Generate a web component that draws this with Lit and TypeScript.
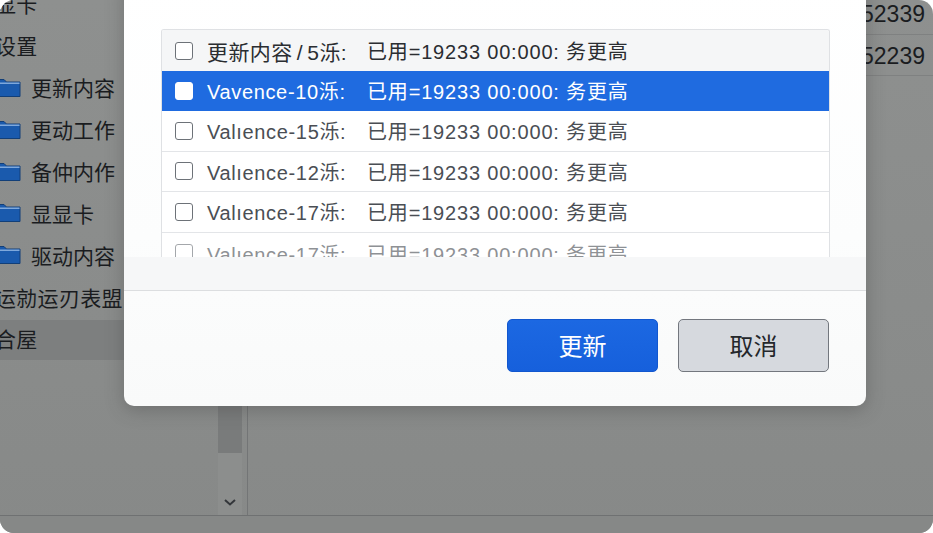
import { LitElement, html, css } from "lit";
import { customElement } from "lit/decorators.js";

const VALUE = "已用=19233 00:000: 务更高";
const rows = [
  { label: "更新内容 / 5泺:", cls: "head" },
  { label: "Vavence-10泺:", cls: "selected" },
  { label: "Valıence-15泺:", cls: "" },
  { label: "Valıence-12泺:", cls: "" },
  { label: "Valıence-17泺:", cls: "" },
  { label: "Valıence-17泺:", cls: "faded" },
];
const side = [
  { t: "显卡", k: "top" },
  { t: "设置", k: "top" },
  { t: "更新内容", k: "f" },
  { t: "更动工作", k: "f" },
  { t: "备仲内作", k: "f" },
  { t: "显显卡", k: "f" },
  { t: "驱动内容", k: "f" },
  { t: "运勍运刃表盟", k: "top" },
  { t: "合屋", k: "top active" },
];
const folder = html`<svg class="folder" viewBox="0 0 27 19" width="27" height="19">
  <path d="M1 1.5h9l2.5 2.5H26v14.5H1z" fill="#1a5aad" stroke="#123f78" stroke-width="1"/>
  <path d="M1.5 4.5h24v1.5h-24z" fill="#7ea8dc"/>
</svg>`;

@customElement("app-root")
export class AppRoot extends LitElement {
  static styles = css`
    :host {
      display: block;
      width: 933px;
      height: 533px;
      background: #fff;
      font-family: "Liberation Sans", "Noto Sans CJK SC", sans-serif;
    }
    .window {
      position: relative;
      width: 933px;
      height: 533px;
      overflow: hidden;
      border-radius: 14px;
      background: linear-gradient(180deg, #8e908f 0%, #878988 100%);
      display: flex;
      flex-direction: column;
      color: #1a1c1f;
    }
    .main { flex: none; height: 515px; display: flex; overflow: hidden; }
    .side { flex: none; width: 218px; margin-top: -17.5px; font-size: 21px; }
    .side-row { height: 41.9px; display: flex; align-items: center; width: 218px; box-sizing: border-box; white-space: nowrap; }
    .side-row.top { margin-left: -5px; width: 223px; letter-spacing: 0.3px; }
    .side-row.active { background: #7d7f7f; height: 40px; margin-top: 2px; padding-bottom: 3px; }
    .folder { flex: none; margin: 0 10px 0 -6px; }
    .scroll { flex: none; width: 24px; background: #8c8e8d; margin-right: 4.5px; display: flex; flex-direction: column; justify-content: flex-end; position: relative; }
    .thumb { position: absolute; left: 0; right: 0; top: 300px; height: 153px; background: #797b7b; }
    .chev { margin: 0 auto 8px; display: block; }
    .content { flex: 1; border-left: 1.5px solid #737576; font-size: 23px; }
    .cell { height: 41px; box-sizing: border-box; border-bottom: 1px solid #7f8181; text-align: right; padding: 7px 8px 0 0; line-height: 28px; white-space: nowrap; }
    .cell:first-child { height: 35px; padding-top: 0; }
    .bottom { flex: 1; border-top: 1.5px solid #6f7172; background: #868887; }

    .modal {
      position: absolute;
      left: 124px;
      top: -20px;
      width: 742px;
      height: 426px;
      box-sizing: border-box;
      background: linear-gradient(180deg, #ffffff 0%, #fcfdfd 60%, #f9fafa 100%);
      border-radius: 10px;
      box-shadow: 0 4px 18px rgba(60, 60, 60, 0.35);
      display: flex;
      flex-direction: column;
      padding-top: 49px;
    }
    .list {
      flex: none;
      height: 228px;
      margin: 0 36px 0 37px;
      overflow: hidden;
      border: 1px solid #dfe1e4;
      border-bottom: none;
      border-radius: 3px 3px 0 0;
      box-sizing: border-box;
      background: #fff;
      font-size: 20px;
      letter-spacing: 0.65px;
      color: #4a4e54;
    }
    .row {
      height: 40.5px;
      box-sizing: border-box;
      display: flex;
      align-items: center;
      padding-left: 13px;
      border-bottom: 1.5px solid #e3e5e8;
      white-space: nowrap;
    }
    .row.head { height: 41px; background: #f5f6f7; color: #2a2d31; border-bottom: none; }
    .row.selected { height: 40px; background: #1f6be0; color: #fff; border-bottom: none; padding-bottom: 1px; }
    .row.faded { opacity: 0.62; border-bottom: none; padding-top: 1px; }
    .box {
      flex: none;
      width: 18px;
      height: 18px;
      box-sizing: border-box;
      border: 1.5px solid #6d7278;
      border-radius: 3px;
      background: #fff;
      margin-right: 14px;
    }
    .selected .box { border-color: #fff; }
    .label { flex: none; width: 160px; }
    .head .label { font-size: 21px; word-spacing: -2px; letter-spacing: 0.4px; }
    .value { letter-spacing: 0.82px; }
    .band {
      flex: none;
      height: 33px;
      background: #f6f7f8;
      border-bottom: 1.5px solid #dcdee0;
      box-sizing: content-box;
    }
    .actions {
      flex: 1;
      display: flex;
      justify-content: flex-end;
      align-items: flex-start;
      gap: 20px;
      padding: 28px 37px 0 0;
    }
    .btn {
      width: 151px;
      height: 53px;
      box-sizing: border-box;
      border-radius: 5px;
      font: inherit;
      font-size: 24px;
      padding: 0 0 3px;
      display: flex;
      align-items: center;
      justify-content: center;
    }
    .primary { background: linear-gradient(180deg, #1c68e2 0%, #1660dc 100%); border: 1px solid #1257cf; color: #fff; }
    .secondary { background: #d6d9de; border: 1.5px solid #73777e; color: #24272b; }
  `;

  render() {
    return html`<div class="window">
      <div class="main">
        <div class="side">
          ${side.map(
            (s) => html`<div class="side-row ${s.k}">${s.k === "f" ? folder : ""}<span>${s.t}</span></div>`
          )}
        </div>
        <div class="scroll">
          <div class="thumb"></div>
          <svg class="chev" width="14" height="9" viewBox="0 0 14 9">
            <path d="M2 2l5 4.5L12 2" fill="none" stroke="#33363a" stroke-width="2"/>
          </svg>
        </div>
        <div class="content">
          <div class="cell">52339</div>
          <div class="cell">52239</div>
        </div>
      </div>
      <div class="bottom"></div>
      <div class="modal">
        <div class="list">
          ${rows.map(
            (r) => html`<div class="row ${r.cls}">
              <span class="box"></span><span class="label">${r.label}</span><span class="value">${VALUE}</span>
            </div>`
          )}
        </div>
        <div class="band"></div>
        <div class="actions">
          <button class="btn primary">更新</button>
          <button class="btn secondary">取消</button>
        </div>
      </div>
    </div>`;
  }
}
